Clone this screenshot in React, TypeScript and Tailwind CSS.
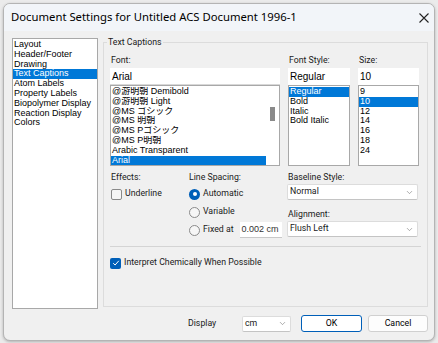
import { ChevronDown } from "lucide-react";

const fontItems = [
    "@游明朝 Demibold",
    "@游明朝 Light",
    "@MS ゴシック",
    "@MS 明朝",
    "@MS Pゴシック",
    "@MS P明朝",
    "Arabic Transparent",
    "Arial",
];
const styleItems = ["Regular", "Bold", "Italic", "Bold Italic"];
const sizeItems = ["9", "10", "12", "14", "16", "18", "24"];
const pages = [
    "Layout",
    "Header/Footer",
    "Drawing",
    "Text Captions",
    "Atom Labels",
    "Property Labels",
    "Biopolymer Display",
    "Reaction Display",
    "Colors",
];

const listFont = {
    fontFamily: "'Liberation Sans', 'Noto Sans CJK JP', sans-serif",
};

function ListItem({ text, on }: { text: string; on?: boolean }) {
    return (
        <div
            className={
                "h-[9.8px] leading-[9.8px] text-[9px] px-[1px] whitespace-nowrap overflow-hidden " +
                (on ? "bg-[#0078d7] text-white" : "text-black")
            }
        >
            {text}
        </div>
    );
}

function Select({ text, w }: { text: string; w: string }) {
    return (
        <div
            className={
                "h-[16px] bg-white border border-[#dcdcdc] border-b-[#c4c4c4] rounded-[2px] flex items-center justify-between pl-[2px] pr-[3px] " +
                w
            }
        >
            <span className="text-[8.75px] text-[#1a1a1a]">{text}</span>
            <ChevronDown size={9} strokeWidth={1.5} className="text-[#707070]" />
        </div>
    );
}

function Radio({ label, on }: { label: string; on?: boolean }) {
    return (
        <div className="flex items-center gap-[3px] h-[18px] whitespace-nowrap">
            {on ? (
                <div className="w-[11px] h-[11px] shrink-0 rounded-full bg-[#005fb8] flex items-center justify-center">
                    <div className="w-[4px] h-[4px] rounded-full bg-white"></div>
                </div>
            ) : (
                <div className="w-[11px] h-[11px] shrink-0 rounded-full border border-[#8a8a8a] bg-[#f6f6f6]"></div>
            )}
            <span className="text-[8.75px] text-[#1a1a1a]">{label}</span>
        </div>
    );
}

export default function App() {
    return (
        <div
            className="w-[438px] h-[343px] bg-[#ebebeb] pt-[3px] pl-[3px]"
            style={{ fontFamily: "Roboto, 'Noto Sans CJK JP', sans-serif" }}
        >
            <div className="w-[432px] h-[338px] rounded-[7px] border border-[#b4b4b4] bg-[#f0f0f0] overflow-hidden flex flex-col shadow-[0_1px_3px_rgba(0,0,0,0.25)]">
                {/* title bar */}
                <div
                    className="h-[27px] shrink-0 bg-[#f2f5f9] flex items-center justify-between pl-[7px] pr-[5px]"
                    style={{ fontFamily: "'Noto Sans', sans-serif" }}
                >
                    <span className="text-[11.3px] text-black">
                        Document Settings for Untitled ACS Document 1996-1
                    </span>
                    <svg width="10" height="10" viewBox="0 0 10 10">
                        <path d="M0.5 0.5 L9.5 9.5 M9.5 0.5 L0.5 9.5" stroke="#222" strokeWidth="1.1" />
                    </svg>
                </div>

                <div className="flex flex-row pl-[8px] pt-[7px]">
                    {/* page list */}
                    <div
                        className="w-[86px] h-[271px] bg-white border border-[#a8a8a8] pt-[1px]"
                        style={listFont}
                    >
                        {pages.map((p, i) => (
                            <ListItem key={i} text={p} on={p === "Text Captions"} />
                        ))}
                    </div>

                    {/* group box */}
                    <div className="relative ml-[5px] mt-[4px] w-[325px] h-[265px] border border-[#dcdcdc] pl-[6px] pt-[10px]">
                        <span className="absolute -top-[7px] left-[3px] px-[1px] bg-[#f0f0f0] text-[8.75px] text-[#1a1a1a]">
                            Text Captions
                        </span>

                        {/* font row */}
                        <div className="flex flex-row gap-[8px]">
                            <div className="w-[170px] flex flex-col">
                                <div className="h-[15px] text-[8.75px] text-[#1a1a1a] pl-[1px] leading-[15px]">Font:</div>
                                <div className="h-[17px] bg-white border-b border-[#d8d8d8] flex items-center pl-[2px] text-[10px]" style={listFont}>
                                    Arial
                                </div>
                                <div className="h-[81px] bg-white border border-[#a8a8a8] flex flex-row" style={listFont}>
                                    <div className="flex-1 pt-[1px]">
                                        {fontItems.map((f, i) => (
                                            <ListItem key={i} text={f} on={f === "Arial"} />
                                        ))}
                                    </div>
                                    <div className="w-[13px] flex justify-center pt-[21px]">
                                        <div className="w-[5px] h-[14px] bg-[#8a8a8a]"></div>
                                    </div>
                                </div>
                            </div>
                            <div className="w-[62px] flex flex-col">
                                <div className="h-[15px] text-[8.75px] text-[#1a1a1a] pl-[1px] leading-[15px]">Font Style:</div>
                                <div className="h-[17px] bg-white flex items-center pl-[2px] text-[10px]" style={listFont}>
                                    Regular
                                </div>
                                <div className="h-[81px] bg-white border border-[#a8a8a8] pt-[1px]" style={listFont}>
                                    {styleItems.map((s, i) => (
                                        <ListItem key={i} text={s} on={i === 0} />
                                    ))}
                                </div>
                            </div>
                            <div className="w-[61px] flex flex-col">
                                <div className="h-[15px] text-[8.75px] text-[#1a1a1a] pl-[1px] leading-[15px]">Size:</div>
                                <div className="h-[17px] bg-white flex items-center pl-[2px] text-[10px]" style={listFont}>
                                    10
                                </div>
                                <div className="h-[81px] bg-white border border-[#a8a8a8] pt-[1px]" style={listFont}>
                                    {sizeItems.map((s, i) => (
                                        <ListItem key={i} text={s} on={s === "10"} />
                                    ))}
                                </div>
                            </div>
                        </div>

                        {/* effects row */}
                        <div className="flex flex-row mt-[4px] h-[70px]">
                            <div className="w-[79px] flex flex-col pl-[1px]">
                                <div className="h-[15px] leading-[15px] text-[8.75px] text-[#1a1a1a]">Effects:</div>
                                <div className="flex items-center gap-[3px] h-[18px]">
                                    <div className="w-[11px] h-[11px] rounded-[2px] border border-[#8a8a8a] bg-[#f6f6f6]"></div>
                                    <span className="text-[8.75px] text-[#1a1a1a]">Underline</span>
                                </div>
                            </div>
                            <div className="w-[98px] flex flex-col">
                                <div className="h-[15px] leading-[15px] text-[8.75px] text-[#1a1a1a]">Line Spacing:</div>
                                <Radio label="Automatic" on />
                                <Radio label="Variable" />
                                <div className="flex items-center">
                                    <Radio label="Fixed at" />
                                    <div className="ml-[6px] w-[42px] h-[16px] bg-white border-b border-[#c8c8c8] flex items-center pl-[2px] text-[9px] text-[#333] whitespace-nowrap" style={listFont}>
                                        0.002 cm
                                    </div>
                                </div>
                            </div>
                            <div className="w-[131px] flex flex-col">
                                <div className="h-[14px] leading-[14px] text-[8.75px] text-[#1a1a1a] pl-[1px]">Baseline Style:</div>
                                <Select text="Normal" w="w-[131px]" />
                                <div className="h-[14px] leading-[14px] mt-[7px] text-[8.75px] text-[#1a1a1a] pl-[1px]">Alignment:</div>
                                <Select text="Flush Left" w="w-[131px]" />
                            </div>
                        </div>

                        <div className="mt-[6px] w-[311px] border-t border-[#d4d4d4]"></div>

                        <div className="flex items-center gap-[3px] h-[16px] mt-[8px]">
                            <div className="w-[11px] h-[11px] rounded-[2px] bg-[#005fb8] flex items-center justify-center">
                                <svg width="8" height="8" viewBox="0 0 8 8">
                                    <path d="M1.2 4.2 L3.1 6 L6.8 1.8" stroke="white" strokeWidth="1" fill="none" />
                                </svg>
                            </div>
                            <span className="text-[8.75px] text-[#1a1a1a]">Interpret Chemically When Possible</span>
                        </div>
                    </div>
                </div>

                {/* bottom bar */}
                <div className="flex flex-row items-center mt-[6px] pl-[184px]">
                    <span className="w-[54px] text-[8.75px] text-[#1a1a1a]">Display</span>
                    <Select text="cm" w="w-[49px]" />
                    <div className="ml-[10px] w-[61px] h-[17px] bg-white border border-[#005fb8] rounded-[3px] flex items-center justify-center text-[8.75px] text-black">
                        OK
                    </div>
                    <div className="ml-[6px] w-[60px] h-[17px] bg-[#fdfdfd] border border-[#d0d0d0] rounded-[3px] flex items-center justify-center text-[8.75px] text-black">
                        Cancel
                    </div>
                </div>
            </div>
        </div>
    );
}
